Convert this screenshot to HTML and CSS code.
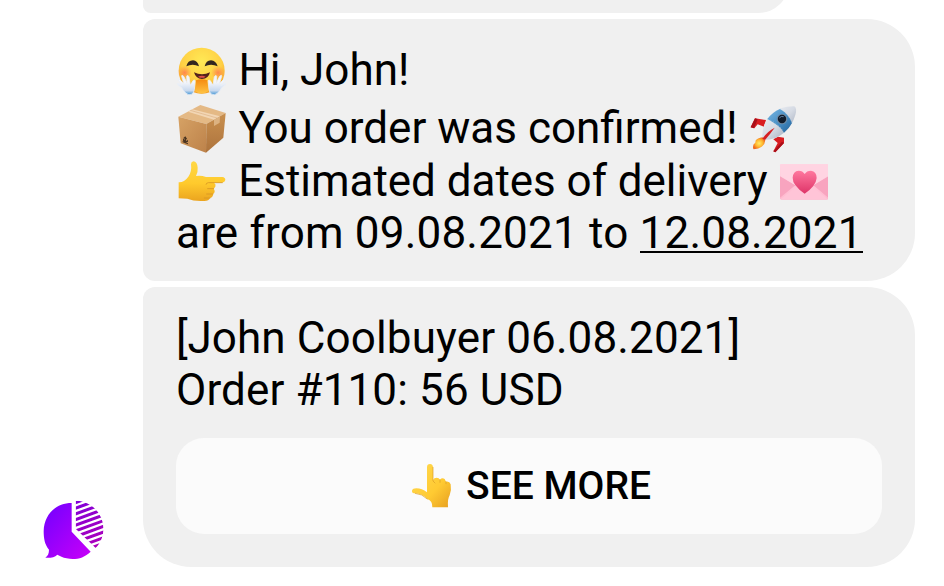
FILE: index.html
```html
<!DOCTYPE html>
<html lang="en">
<head>
<meta charset="utf-8">
<title>Order messages</title>
<link rel="stylesheet" href="styles.css">
</head>
<body>
<main class="chat">
  <div class="avatar">
    <svg width="80" height="74" viewBox="0 0 240 222" role="img" aria-label="Shop">
      <defs>
        <linearGradient id="brand" x1="0" y1="0" x2="1" y2="1"><stop offset="0" stop-color="#7000ff"/><stop offset="1" stop-color="#c900f8"/></linearGradient>
        <linearGradient id="stripe" gradientUnits="userSpaceOnUse" x1="125" y1="30" x2="205" y2="165"><stop stop-color="#8100d9"/><stop offset="1" stop-color="#b000b8"/></linearGradient>
        <clipPath id="slice"><path d="M125 26A84 84 0 0 1 185 168L125 110Z"/></clipPath>
      </defs>
      <path fill="url(#brand)" d="M113 33V119L170 179C149 200 122 204 98 199C86 197 78 192 70 188C61 196 48 199 34 197C41 192 45 185 45 173C32 158 29 139 29 118C30 67 66 33 113 33Z"/>
      <g clip-path="url(#slice)" stroke="url(#stripe)" stroke-width="9">
        <path d="M105 39L225 -5M105 56L225 12M105 73L225 29M105 90L225 46M105 107L225 63M105 124L225 80M105 141L225 97M105 158L225 114M105 175L225 131M105 192L225 148"/>
      </g>
    </svg>
  </div>
  <div class="thread">
    <div class="bubble previous"></div>
    <section class="bubble confirmation">
      <p class="line greeting"><svg class="emoji" viewBox="18 12 150 156" role="img" aria-label="Hugging face">
        <defs>
          <radialGradient id="face" cx=".5" cy=".3" r=".72"><stop stop-color="#ffe955"/><stop offset=".6" stop-color="#ffd044"/><stop offset="1" stop-color="#f39a22"/></radialGradient>
          <radialGradient id="blush"><stop stop-color="#ff6f50" stop-opacity=".75"/><stop offset="1" stop-color="#ff8050" stop-opacity="0"/></radialGradient>
          <linearGradient id="glove" x2="0" y2="1"><stop offset=".35" stop-color="#f4f6fb"/><stop offset=".78" stop-color="#c9d9ee"/><stop offset="1" stop-color="#3e93d3"/></linearGradient>
          <linearGradient id="hug" x2="0" y2="1"><stop stop-color="#f58a10"/><stop offset="1" stop-color="#ffc443"/></linearGradient>
        </defs>
        <circle cx="95" cy="92" r="69" fill="url(#face)"/>
        <circle cx="44" cy="98" r="21" fill="url(#blush)"/><circle cx="144" cy="98" r="21" fill="url(#blush)"/>
        <path d="M78 121Q95 115 112 121L115 154Q95 167 75 154Z" fill="url(#hug)"/>
        <path d="M49 79Q53 61 69 61Q83 62 87 79Q68 70 49 79ZM104 79Q108 61 123 61Q138 62 143 79Q123 70 104 79Z" fill="#33271f"/>
        <path d="M72 97Q96 109 120 97Q116 116 96 117Q77 116 72 97Z" fill="#54231b"/><path d="M84 110Q96 105 107 110Q96 117 84 110Z" fill="#e34e4b"/>
        <g id="hand"><path d="M48 160Q37 150 35 143L23 134Q19 129 27 131L36 136L25 120Q22 114 28 118L41 130L35 109Q34 103 41 109L51 128L50 109Q51 103 57 110L61 136L69 122Q77 116 75 129L73 149Q72 156 67 162Q56 168 48 160Z" fill="url(#glove)" stroke="#e9eef6" stroke-width="2.5" stroke-linejoin="round"/></g>
        <use href="#hand" transform="translate(190 0) scale(-1 1)"/>
      </svg><span class="after-emoji"> Hi, John!</span></p>
      <p class="line"><svg class="emoji" viewBox="18 12 150 156" role="img" aria-label="Package">
        <defs><linearGradient id="front" x2="1" y2="1"><stop stop-color="#d6a265"/><stop offset="1" stop-color="#bd824a"/></linearGradient><linearGradient id="side" x2="0" y2="1"><stop stop-color="#c9904f"/><stop offset="1" stop-color="#ad733d"/></linearGradient></defs>
        <path d="M25 56L91 21L167 45L109 78Z" fill="#e4b985"/>
        <path d="M25 56L109 78L108 164L32 136Z" fill="url(#front)"/>
        <path d="M109 78L167 45L160 119L108 164Z" fill="url(#side)"/>
        <path d="M54 41L67 34L150 55L132 65Z" fill="#f2d6b4"/><path d="M132 65L150 55L149 74L132 84Z" fill="#dcb281"/>
        <path d="M61 37L141 60" stroke="#d5a474" stroke-width="1.5"/>
        <path d="M46 115L52 124H48V129L54 126V131L47 134L39 128V121L44 126V122L40 120ZM38 129L54 136V139L38 133Z" fill="#4a3421"/>
      </svg><span class="after-emoji"> You order was confirmed! </span><svg class="emoji" viewBox="21 12 150 156" role="img" aria-label="Rocket">
        <defs><linearGradient id="hull" x2="1" y2="1"><stop stop-color="#f5f7fa"/><stop offset=".5" stop-color="#d6dbe4"/><stop offset="1" stop-color="#8d98ab"/></linearGradient><linearGradient id="blue" x2="1" y2="1"><stop stop-color="#79b8e3"/><stop offset=".5" stop-color="#4a90c6"/><stop offset="1" stop-color="#23649c"/></linearGradient><radialGradient id="flame"><stop stop-color="#ffeb65"/><stop offset=".6" stop-color="#ffb52e"/><stop offset="1" stop-color="#ef6b20"/></radialGradient></defs>
        <path d="M62 118Q46 120 40 129Q43 133 35 139Q31 150 35 154Q50 153 59 146Q69 139 70 126Z" fill="url(#flame)"/>
        <path d="M39 61L72 66L66 86L47 79L37 91L26 88Z" fill="#d91d21"/><path d="M39 61L47 64L36 91L26 88Z" fill="#a90f19"/>
        <path d="M108 116L126 119V135L100 163L94 160L107 135L94 124Z" fill="#d91d21"/><path d="M126 135L100 163L94 160L120 131Z" fill="#a90f19"/>
        <path d="M61 116Q60 74 91 46Q116 24 157 25Q166 31 160 51Q151 83 124 106Q100 126 68 125Z" fill="url(#hull)"/>
        <path d="M76 63Q91 43 114 33Q139 47 150 75Q142 91 126 104Q116 84 76 63Z" fill="url(#blue)"/>
        <path d="M114 33Q139 47 150 75M76 63Q112 77 126 104" fill="none" stroke="#a8c8df" stroke-width="2" stroke-dasharray="3 6"/>
        <circle cx="120" cy="63" r="16" fill="#6e8ba5"/><circle cx="120" cy="63" r="12.5" fill="#101c2c"/><path d="M112 60Q117 53 125 56" stroke="#6483a2" stroke-width="3" fill="none"/>
        <path d="M98 89Q77 99 61 122L69 126Q83 110 98 89Z" fill="#d51f23"/>
      </svg></p>
      <p class="line estimate"><svg class="emoji" viewBox="18 1 150 156" role="img" aria-label="Pointing right">
        <defs><linearGradient id="skin" x2="0" y2="1"><stop stop-color="#ffd845"/><stop offset=".55" stop-color="#ffca2d"/><stop offset="1" stop-color="#eba41f"/></linearGradient></defs>
        <path d="M26 83Q42 84 55 66Q66 51 63 29Q63 21 70 20Q82 21 83 39Q84 54 78 64Q92 61 108 67H157Q166 68 166 76Q165 83 156 84H132Q139 89 136 96L131 102Q138 112 129 118Q130 127 120 130Q117 139 103 139Q72 141 52 132L26 131Z" fill="url(#skin)"/>
        <path d="M157 84H115Q108 85 108 89M131 102H113M129 118H110M120 130H103" fill="none" stroke="#d69423" stroke-width="2.4" stroke-linecap="round"/>
      </svg><span class="after-emoji"> Estimated dates of delivery </span><svg class="emoji" viewBox="18 1 150 156" role="img" aria-label="Love letter">
        <defs><linearGradient id="paper" x2="0" y2="1"><stop stop-color="#ffd7e5"/><stop offset="1" stop-color="#ffb8ce"/></linearGradient><linearGradient id="heart" x2="0" y2="1"><stop stop-color="#ff789f"/><stop offset="1" stop-color="#de3468"/></linearGradient></defs>
        <rect x="24" y="28" width="145" height="107" rx="4" fill="url(#paper)"/>
        <path d="M24 65L70 92L24 129ZM169 65L124 92L169 129Z" fill="#f8a4bf"/><path d="M26 133L76 93H119L167 133Z" fill="#ffc4d7"/><path d="M25 29H168V64L97 108L25 64Z" fill="#ffd4e2"/>
        <path d="M98 117Q61 91 62 69Q63 49 80 48Q92 48 98 58Q104 48 117 48Q134 50 134 70Q132 94 98 117Z" fill="url(#heart)"/>
      </svg></p>
      <p class="line period">are from 09.08.2021 to <span class="date">12.08.2021</span></p>
    </section>
    <section class="bubble order">
      <p class="line">[John Coolbuyer 06.08.2021]</p>
      <p class="line">Order #110: 56 USD</p>
      <button class="more" type="button"><svg class="point" viewBox="33 21 126 144" role="img" aria-label="Pointing up">
        <defs><linearGradient id="skinUp" x2="1" y2="1"><stop stop-color="#ffda52"/><stop offset=".6" stop-color="#ffca32"/><stop offset="1" stop-color="#e69e20"/></linearGradient></defs>
        <path d="M81 37Q81 27 90 27Q98 27 99 37V75Q102 68 110 68Q117 68 120 74Q126 67 134 72L138 80Q149 78 152 88Q155 105 149 121Q142 132 144 157H97Q98 138 82 132Q66 116 46 115Q35 115 36 107Q38 100 49 100Q66 100 81 112Z" fill="url(#skinUp)"/>
        <path d="M99 37V78L105 84M120 74V82M138 80V86M82 132Q66 116 46 115" fill="none" stroke="#d99c25" stroke-width="2" stroke-linecap="round"/>
      </svg><span>SEE MORE</span></button>
    </section>
  </div>
</main>
</body>
</html>
```
FILE: styles.css
```css
* { box-sizing: border-box; }

body {
  margin: 0;
  background: #fff;
  color: #000;
  font-family: Roboto, "Liberation Sans", sans-serif;
  overflow: hidden;
}

.chat {
  display: flex;
  height: 586px;
}

.avatar {
  display: flex;
  align-items: flex-end;
  width: 143px;
  padding: 0 0 20px 34px;
}

.avatar svg { display: block; }

.thread {
  display: flex;
  flex-direction: column;
  gap: 6px;
  width: 772px;
}

.bubble {
  background: #f0f0f0;
  border-radius: 12px 48px 48px 12px;
}

.previous {
  width: 646px;
  height: 61px;
  margin-top: -48px;
  flex-shrink: 0;
}

.confirmation {
  height: 262px;
  padding: 25px 33px 0;
}

.order {
  height: 280px;
  padding: 25px 33px 0;
  border-bottom-left-radius: 48px;
}

.line {
  display: flex;
  height: 52px;
  margin: 0;
  font-size: 44px;
  line-height: 52px;
  white-space: pre;
}

.greeting { margin-bottom: 6px; }

.estimate {
  margin-top: 1px;
  letter-spacing: -0.04px;
}

.period { letter-spacing: 0.2px; }

.order .line { letter-spacing: 0.12px; }

.after-emoji { margin-left: 1.5px; }

.emoji {
  width: 50px;
  height: 52px;
  flex: none;
}

.date {
  height: 46px;
  border-bottom: 2px solid #000;
}

.more {
  display: flex;
  align-items: center;
  justify-content: center;
  gap: 13px;
  width: 706px;
  height: 96px;
  margin: 22px 0 0;
  padding: 0 0 0 4px;
  border: 0;
  border-radius: 28px;
  background: #fbfbfb;
  color: #000;
  font: 500 39px/46px Roboto, "Liberation Sans", sans-serif;
}

.point {
  width: 42px;
  height: 48px;
}
```
